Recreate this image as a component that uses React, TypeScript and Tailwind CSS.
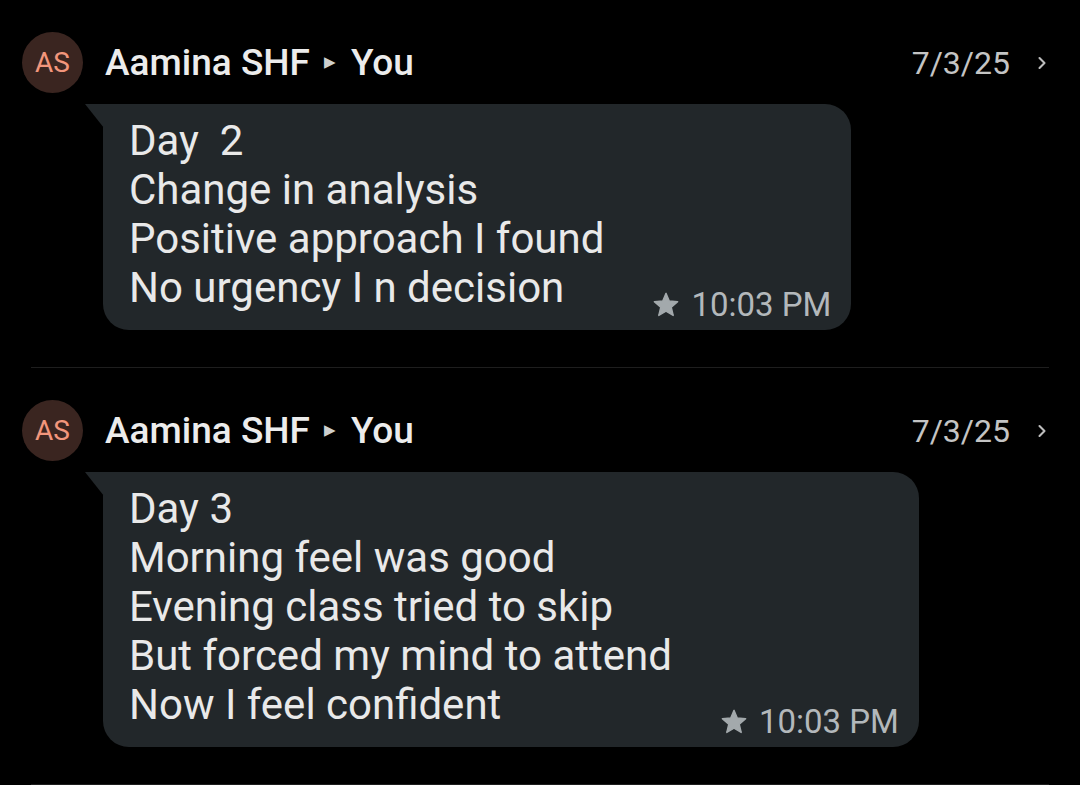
import { ChevronRight } from "lucide-react";

type Msg = {
  lines: string[];
  date: string;
  time: string;
};

const messages: Msg[] = [
  {
    lines: ["Day  2", "Change in analysis", "Positive approach I found", "No urgency I n decision"],
    date: "7/3/25",
    time: "10:03 PM",
  },
  {
    lines: [
      "Day 3",
      "Morning feel was good",
      "Evening class tried to skip",
      "But forced my mind to attend",
      "Now I feel confident",
    ],
    date: "7/3/25",
    time: "10:03 PM",
  },
];

function Star() {
  return (
    <svg viewBox="0 0 24 24" className="w-[28px] h-[28px] fill-[#a3a9ac] stroke-[#a3a9ac]" strokeWidth={1.2} strokeLinejoin="round">
      <path d="M12 17.27L18.18 21l-1.64-7.03L22 9.24l-7.19-.61L12 2 9.19 8.63 2 9.24l5.46 4.73L5.82 21z" />
    </svg>
  );
}

function MessageItem({ msg }: { msg: Msg }) {
  return (
    <div className="border-b border-[#1e1e1e] mx-[31px]">
      <div className="pt-[32px] -mx-[31px] px-[22px]">
        <div className="flex items-center h-[61px]">
          <div className="w-[61px] h-[61px] rounded-full bg-[#3a2520] flex items-center justify-center text-[#f2967c] text-[28px]">
            AS
          </div>
          <div className="ml-[22px] flex items-center text-[37px] font-medium text-[#ececec] leading-none">
            <span>Aamina SHF</span>
            <span className="ml-[14px] mr-[15px] text-[15px] text-[#cfcfcf]">▶</span>
            <span>You</span>
          </div>
          <div className="ml-auto flex items-center text-[32px] text-[#c4c4c4]">
            <span>{msg.date}</span>
            <ChevronRight className="ml-[22px] mr-[6px] w-[20px] h-[20px] text-[#bdbdbd]" strokeWidth={2.5} />
          </div>
        </div>
        <div className="pl-[81px] pt-[11px] pb-[37px]">
          <div className="relative inline-flex items-end bg-[#22272a] rounded-[26px] rounded-tl-none pl-[26px] pr-[20px] pt-[12px] pb-[7px]">
            <svg className="absolute left-[-18px] top-0 w-[19px] h-[24px]" viewBox="0 0 19 24">
              <path d="M0 0 H19 V24 Z" fill="#22272a" />
            </svg>
            <div className="text-[42px] leading-[49px] text-[#e9e9e9] mb-[11px] whitespace-pre">
              {msg.lines.map((l, i) => (
                <div key={i}>{l}</div>
              ))}
            </div>
            <div className="ml-[48px] flex items-center gap-[11px] h-[36px] text-[33px] text-[#b3b8bb] whitespace-nowrap">
              <Star />
              <span>{msg.time}</span>
            </div>
          </div>
        </div>
      </div>
    </div>
  );
}

export default function App() {
  return (
    <div className="w-[1080px] h-[785px] bg-black overflow-hidden font-['Roboto',sans-serif]">
      {messages.map((m, i) => (
        <MessageItem key={i} msg={m} />
      ))}
    </div>
  );
}
